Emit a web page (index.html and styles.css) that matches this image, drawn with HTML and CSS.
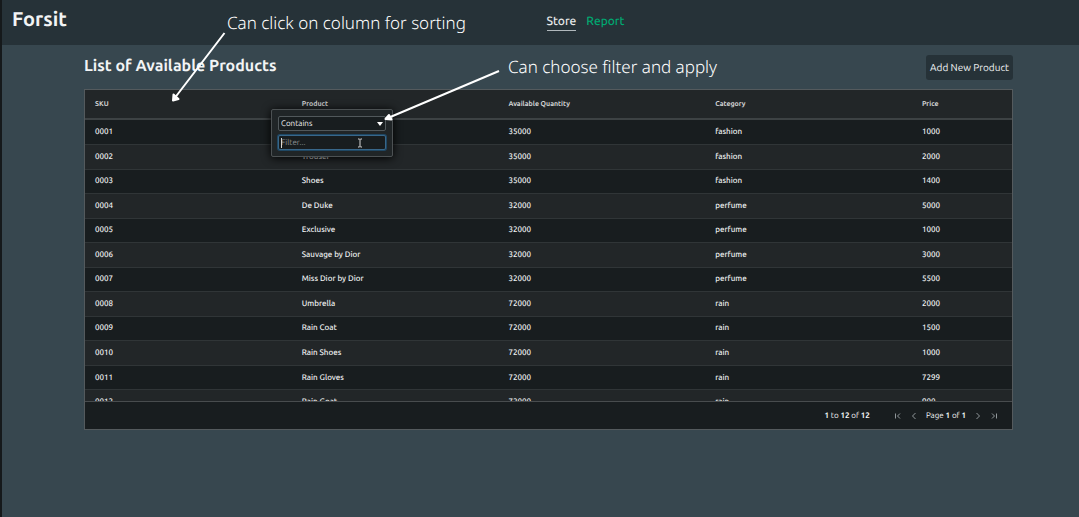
FILE: index.html
```html
<!DOCTYPE html>
<html lang="en">
<head>
<meta charset="utf-8">
<title>Forsit</title>
<link rel="stylesheet" href="styles.css">
</head>
<body>
<header class="topbar">
  <div class="brand">Forsit</div>
  <nav class="nav">
    <a class="nav-link active" href="#store">Store</a>
    <a class="nav-link" href="#report">Report</a>
  </nav>
</header>
<main class="content">
  <div class="heading">
    <h1 class="title">List of Available Products</h1>
    <button class="add" type="button">Add New Product</button>
  </div>
  <section class="grid">
    <div class="viewport">
      <table class="table">
        <thead><tr><th>SKU</th><th>Product</th><th>Available Quantity</th><th>Category</th><th class="price">Price</th></tr></thead>
        <tbody>
          <tr><td>0001</td><td>Shirt</td><td>35000</td><td>fashion</td><td>1000</td></tr>
          <tr><td>0002</td><td>Trouser</td><td>35000</td><td>fashion</td><td>2000</td></tr>
          <tr><td>0003</td><td>Shoes</td><td>35000</td><td>fashion</td><td>1400</td></tr>
          <tr><td>0004</td><td>De Duke</td><td>32000</td><td>perfume</td><td>5000</td></tr>
          <tr><td>0005</td><td>Exclusive</td><td>32000</td><td>perfume</td><td>1000</td></tr>
          <tr><td>0006</td><td>Sauvage by Dior</td><td>32000</td><td>perfume</td><td>3000</td></tr>
          <tr><td>0007</td><td>Miss Dior by Dior</td><td>32000</td><td>perfume</td><td>5500</td></tr>
          <tr><td>0008</td><td>Umbrella</td><td>72000</td><td>rain</td><td>2000</td></tr>
          <tr><td>0009</td><td>Rain Coat</td><td>72000</td><td>rain</td><td>1500</td></tr>
          <tr><td>0010</td><td>Rain Shoes</td><td>72000</td><td>rain</td><td>1000</td></tr>
          <tr><td>0011</td><td>Rain Gloves</td><td>72000</td><td>rain</td><td>7299</td></tr>
          <tr><td>0012</td><td>Rain Goat</td><td>72000</td><td>rain</td><td>900</td></tr>
        </tbody>
      </table>
    </div>
    <footer class="pager">
      <span class="summary"><b>1</b> to <b>12</b> of <b>12</b></span>
      <div class="pages">
        <button class="page-button" type="button" aria-label="First page"><svg viewBox="0 0 8 8"><path d="M1.5 1.5v5M6 1.5L3.5 4 6 6.500"/></svg></button>
        <button class="page-button" type="button" aria-label="Previous page"><svg viewBox="0 0 8 8"><path d="M5.500 1L2.500 4l3 3"/></svg></button>
        <span>Page <b>1</b> of <b>1</b></span>
        <button class="page-button" type="button" aria-label="Next page"><svg viewBox="0 0 8 8"><path d="M2.500 1l3 3-3 3"/></svg></button>
        <button class="page-button" type="button" aria-label="Last page"><svg viewBox="0 0 8 8"><path d="M2 1.500L4.500 4 2 6.500M6.500 1.500v5"/></svg></button>
      </div>
    </footer>
    <form class="filter">
      <select class="field" aria-label="Filter type"><option>Contains</option></select>
      <svg class="caret" viewBox="0 0 6 4"><path d="M0 0h6L3 4z"/></svg>
      <input class="field focus" type="text" placeholder="Filter..." aria-label="Filter value">
      <svg class="ibeam" viewBox="0 0 6 10"><path d="M1 1h1.500l.5.500.5-.5h1.500M3 1.500v7M1 9h1.500l.5-.5.5.5h1.500"/></svg>
      <span class="text-caret"></span>
    </form>
  </section>
</main>
<div class="edge"></div>
<svg class="arrows" viewBox="0 0 500 110">
  <path class="line" d="M224.500 33L175.500 97M499 71L388 118"/>
  <path class="head" d="M173.500 94.500l5 4.500-5.500 1.500z"/>
  <path class="head" d="M389 115l2.500 4.500-6-.5z"/>
</svg>
<p class="note sorting">Can click on column for sorting</p>
<p class="note filtering">Can choose filter and apply</p>
</body>
</html>
```
FILE: styles.css
```css
* { box-sizing: border-box; }
body {
  margin: 0;
  min-height: 100vh;
  background: #37474f;
  color: #f2f4f5;
  font-family: Ubuntu, "Noto Sans", sans-serif;
  font-size: 8px;
  text-rendering: geometricPrecision;
}
button, input, select { font: inherit; color: inherit; text-rendering: inherit; }
.topbar {
  display: grid;
  grid-template-columns: 1fr 1fr;
  height: 45px;
  padding-left: 12px;
  background: #263238;
}
.brand { font-size: 20px; line-height: 38px; font-weight: 600; }
.nav { display: flex; align-items: flex-start; gap: 10px; padding: 14px 0 0 1px; }
.nav-link { color: #00a870; font-size: 12px; line-height: 16px; font-weight: 500; text-decoration: none; }
.active { color: #e6e9ea; border-bottom: 1px solid #b0b8bc; }
.content { padding: 9px 66px 0 84px; }
.heading { display: flex; justify-content: space-between; align-items: center; height: 26px; margin-bottom: 9px; }
.title { margin: 0 0 2px; font-size: 16px; line-height: 20px; font-weight: 600; }
.add { padding: 0 4px; height: 25px; border: 0; border-radius: 3px; background: #263238; font-size: 10px; }
.grid { position: relative; border: 1px solid #545a5d; background: #181d1f; }
.viewport { height: 312px; overflow: hidden; border-bottom: 1px solid #484c4e; }
.table { width: 100%; height: 325px; table-layout: fixed; border-collapse: collapse; }
.table th, .table td { padding: 0 10px; text-align: left; line-height: 12px; white-space: nowrap; }
.table th { width: 22.3%; height: 29px; font-size: 7px; font-weight: 600; color: #d2d4d5; border-bottom: 2px solid #3d4244; }
.table .price { width: auto; }
.table thead, .table tbody tr:nth-child(even) { background: #222628; }
.table td { border-bottom: 1px solid #303537; font-weight: 500; }
.pager { display: flex; justify-content: flex-end; align-items: center; gap: 24px; height: 27px; padding-right: 14px; font-size: 8px; }
.pages { display: flex; align-items: center; gap: 8px; }
.page-button { display: flex; padding: 0; border: 0; background: none; }
.page-button svg { width: 8px; height: 8px; fill: none; stroke: #90979a; stroke-width: 1; }
.filter {
  position: absolute;
  left: 186px;
  top: 19px;
  display: flex;
  flex-direction: column;
  gap: 4px;
  width: 122px;
  padding: 6px;
  border: 1px solid #4c5153;
  border-radius: 2px;
  background: #202527;
  box-shadow: 0 1px 10px #000000;
}
.field { appearance: none; width: 100%; height: 15px; padding: 0 2px; border: 1px solid #51585b; border-radius: 2px; background: #181d1f; outline: none; }
.focus { border-color: #38678a; box-shadow: 0 0 0 1px #1f4763; }
.focus::placeholder { color: #8d9294; opacity: 1; }
.caret { position: absolute; right: 9px; top: 12px; width: 6px; height: 4px; fill: #ffffff; }
.ibeam { position: absolute; left: 85px; top: 28px; width: 6px; height: 10px; fill: none; stroke: #d8d8d8; }
.text-caret { position: absolute; left: 9px; top: 28px; width: 1px; height: 10px; background: #d8d8d8; }
.edge { position: absolute; left: 0; top: 0; bottom: 0; width: 2px; background: #15191b; }
.arrows { position: absolute; left: 0; top: 0; width: 500px; height: 110px; overflow: visible; pointer-events: none; }
.line { fill: none; stroke: #ffffff; stroke-width: 2; }
.head { fill: #ffffff; stroke: #ffffff; stroke-width: 2; stroke-linejoin: round; }
.note { position: absolute; margin: 0; color: #ffffff; font-family: "Noto Sans", sans-serif; font-size: 17px; font-weight: 300; line-height: 20px; white-space: nowrap; }
.sorting { left: 227px; top: 13px; }
.filtering { left: 508px; top: 57px; }
```
